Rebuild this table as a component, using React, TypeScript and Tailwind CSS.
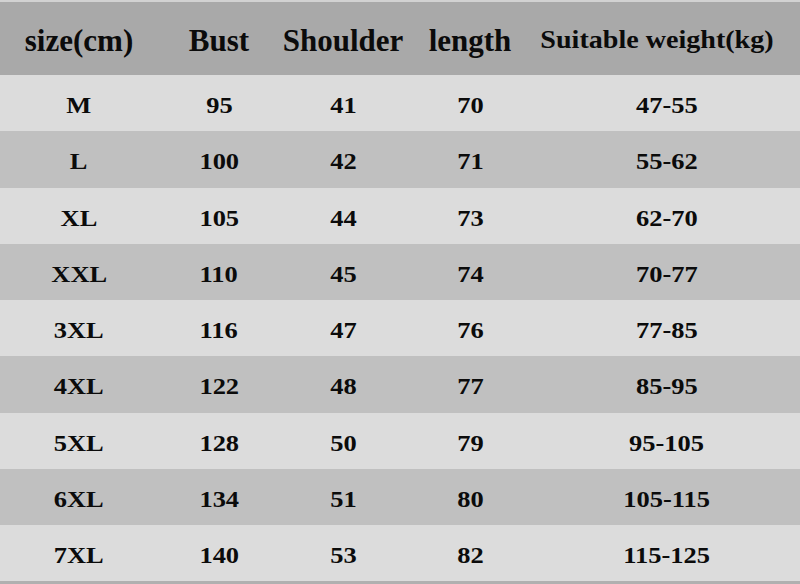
const rows = [
  ["M", "95", "41", "70", "47-55"],
  ["L", "100", "42", "71", "55-62"],
  ["XL", "105", "44", "73", "62-70"],
  ["XXL", "110", "45", "74", "70-77"],
  ["3XL", "116", "47", "76", "77-85"],
  ["4XL", "122", "48", "77", "85-95"],
  ["5XL", "128", "50", "79", "95-105"],
  ["6XL", "134", "51", "80", "105-115"],
  ["7XL", "140", "53", "82", "115-125"],
]

export default function App() {
  return (
    <div
      className="w-[800px] h-[584px] overflow-hidden bg-[#b0b0b0] text-[#0b0b0b] font-bold"
      style={{ fontFamily: '"Liberation Serif", "Times New Roman", serif' }}
    >
      <div className="h-[2px] bg-[#d2d2d2]" />
      {/* header */}
      <div className="grid grid-cols-[158px_122px_126px_128px_1fr] h-[73px] items-center bg-[#a9a9a9] text-[31px] leading-none pt-[3px]">
        <div className="text-center">size(cm)</div>
        <div className="text-center">Bust</div>
        <div className="text-center">Shoulder</div>
        <div className="text-center">length</div>
        <div className="text-center text-[26px] pr-[20px]">
          <span className="inline-block scale-x-[1.08]">Suitable weight(kg)</span>
        </div>
      </div>
      {rows.map((r, i) => (
        <div
          key={r[0]}
          className={
            "grid grid-cols-[158px_122px_126px_128px_1fr] h-[56.25px] items-center text-[23px] leading-none pt-[5px] " +
            (i % 2 === 0 ? "bg-[#dcdcdc]" : "bg-[#c0c0c0]")
          }
        >
          {r.map((c, j) => (
            <div key={j} className="text-center">
              <span className="inline-block scale-x-[1.15]">{c}</span>
            </div>
          ))}
        </div>
      ))}
    </div>
  )
}
